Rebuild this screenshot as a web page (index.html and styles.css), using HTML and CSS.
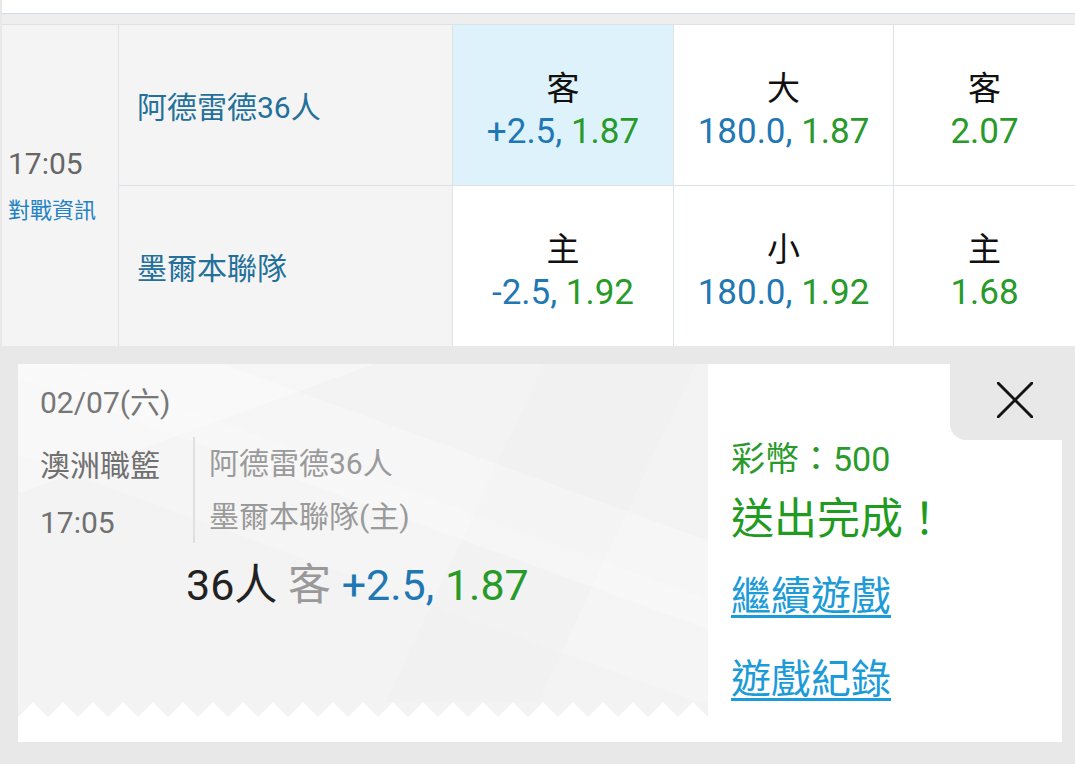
FILE: index.html
```html
<!DOCTYPE html>
<html lang="zh-Hant">
<head>
<meta charset="utf-8">
<link rel="stylesheet" href="styles.css">
</head>
<body>
<div class="page">
  <div class="topbar"></div>
  <div class="band"></div>
  <div class="board">
    <div class="cell time">
      <div class="clock">17:05</div>
      <div class="vs">對戰資訊</div>
    </div>
    <div class="cell team">阿德雷德36人</div>
    <div class="cell odds sel"><div class="lab">客</div><div class="val"><span class="b">+2.5,</span> <span class="g">1.87</span></div></div>
    <div class="cell odds"><div class="lab">大</div><div class="val"><span class="b">180.0,</span> <span class="g">1.87</span></div></div>
    <div class="cell odds"><div class="lab">客</div><div class="val"><span class="g">2.07</span></div></div>
    <div class="cell team">墨爾本聯隊</div>
    <div class="cell odds"><div class="lab">主</div><div class="val"><span class="b">-2.5,</span> <span class="g">1.92</span></div></div>
    <div class="cell odds"><div class="lab">小</div><div class="val"><span class="b">180.0,</span> <span class="g">1.92</span></div></div>
    <div class="cell odds"><div class="lab">主</div><div class="val"><span class="g">1.68</span></div></div>
  </div>
  <div class="result">
    <div class="ticket">
      <div class="ticket-body">
        <div class="date">02/07(六)</div>
        <div class="info">
          <div class="league">
            <div>澳洲職籃</div>
            <div>17:05</div>
          </div>
          <div class="teams">
            <div>阿德雷德36人</div>
            <div>墨爾本聯隊(主)</div>
          </div>
        </div>
        <div class="pick"><span class="who">36人</span> <span class="side">客</span> <span class="b">+2.5,</span> <span class="g">1.87</span></div>
      </div>
      <div class="zigzag"></div>
    </div>
    <div class="status">
      <div class="close">
        <svg width="36" height="36" viewBox="0 0 36 36"><path d="M1 1 L35 35 M35 1 L1 35" stroke="#151515" stroke-width="3" stroke-linecap="round" fill="none"/></svg>
      </div>
      <div class="coin">彩幣：500</div>
      <div class="done">送出完成！</div>
      <a class="link first" href="#">繼續遊戲</a>
      <a class="link second" href="#">遊戲紀錄</a>
    </div>
  </div>
</div>
</body>
</html>
```

FILE: styles.css
```css
body {
  margin: 0;
  background: #e8e8e8;
  font-family: Roboto, "Noto Sans CJK TC", sans-serif;
}

.page {
  width: 1075px;
  height: 764px;
  overflow: hidden;
}

.topbar {
  height: 13px;
  background: #fff;
  border-bottom: 1px solid #d3dce3;
  margin-left: 2px;
}

.band {
  height: 10px;
  background: #eeeeee;
  margin-left: 2px;
}

.board {
  display: grid;
  grid-template-columns: 116px 333px 220px 219px 1fr;
  grid-template-rows: 160px 160px;
  gap: 1px;
  background: #dde2e6;
  border-top: 1px solid #dde2e6;
  margin-left: 2px;
}

.cell {
  background: #fff;
}

.time {
  grid-row: span 2;
  background: #f4f4f4;
  display: flex;
  flex-direction: column;
  justify-content: center;
  padding-left: 6px;
}

.clock {
  font-size: 30px;
  line-height: 36px;
  color: #666;
}

.vs {
  font-size: 22px;
  line-height: 30px;
  margin-top: 14px;
  color: #1f82c4;
}

.team {
  background: #f4f4f4;
  display: flex;
  align-items: center;
  padding-left: 18px;
  font-size: 30px;
  color: #23709a;
}

.odds {
  display: flex;
  flex-direction: column;
  align-items: center;
  justify-content: center;
  padding-top: 9px;
  box-sizing: border-box;
}

.odds.sel {
  background: #def2fb;
}

.lab {
  font-size: 33px;
  line-height: 43px;
  color: #111;
}

.val {
  font-size: 35px;
  line-height: 43px;
}

.b {
  color: #1f77b4;
}

.g {
  color: #279a2a;
}

.result {
  display: flex;
  margin: 18px 13px 0 18px;
  height: 378px;
}

.ticket {
  width: 690px;
  display: flex;
  flex-direction: column;
  background: #fff;
}

.ticket-body {
  height: 338px;
  box-sizing: border-box;
  padding: 19px 0 0 22px;
  background:
    linear-gradient(160deg, rgba(255,255,255,0.3) 0 22%, transparent 22%),
    linear-gradient(20deg, transparent 0 55%, rgba(255,255,255,0.25) 55% 70%, transparent 70%),
    linear-gradient(115deg, transparent 0 62%, rgba(238,238,238,0.35) 62% 80%, transparent 80%),
    linear-gradient(200deg, transparent 0 40%, rgba(255,255,255,0.2) 40% 58%, transparent 58%),
    #f3f3f3;
}

.zigzag {
  height: 15px;
  background: #fff url("data:image/svg+xml,%3Csvg xmlns='http://www.w3.org/2000/svg' width='30' height='15'%3E%3Cpath d='M0 0 H30 V15 L15 0 L0 15 Z' fill='%23f3f3f3'/%3E%3C/svg%3E") repeat-x;
}

.date {
  font-size: 30px;
  line-height: 40px;
  color: #777;
}

.info {
  display: flex;
  align-items: flex-start;
  margin-top: 14px;
  font-size: 30px;
}

.league {
  width: 153px;
  line-height: 57px;
  color: #707070;
}

.teams {
  border-left: 2px solid #e0e0e0;
  padding-left: 14px;
  line-height: 53px;
  color: #9a9a9a;
}

.pick {
  margin: 9px 0 0 146px;
  font-size: 43px;
  line-height: 50px;
}

.who {
  color: #222;
}

.side {
  color: #999;
}

.status {
  flex: 1;
  background: #fff;
  position: relative;
  padding: 73px 0 0 23px;
}

.close {
  position: absolute;
  top: 0;
  right: 0;
  width: 112px;
  height: 76px;
  box-sizing: border-box;
  background: #e8e8e8;
  border-bottom-left-radius: 16px;
  display: flex;
  justify-content: flex-end;
  align-items: flex-start;
  padding: 18px 29px 0 0;
}

.coin {
  font-size: 34px;
  line-height: 44px;
  color: #2a9a2a;
}

.done {
  font-size: 43px;
  line-height: 60px;
  margin-top: 8px;
  color: #1f9b1f;
}

.link {
  display: block;
  width: max-content;
  font-size: 40px;
  line-height: 56px;
  color: #1b9bd8;
  text-decoration: underline;
  text-decoration-thickness: 3px;
  text-underline-offset: 5px;
}

.link.first {
  margin-top: 20px;
}

.link.second {
  margin-top: 27px;
}
```
